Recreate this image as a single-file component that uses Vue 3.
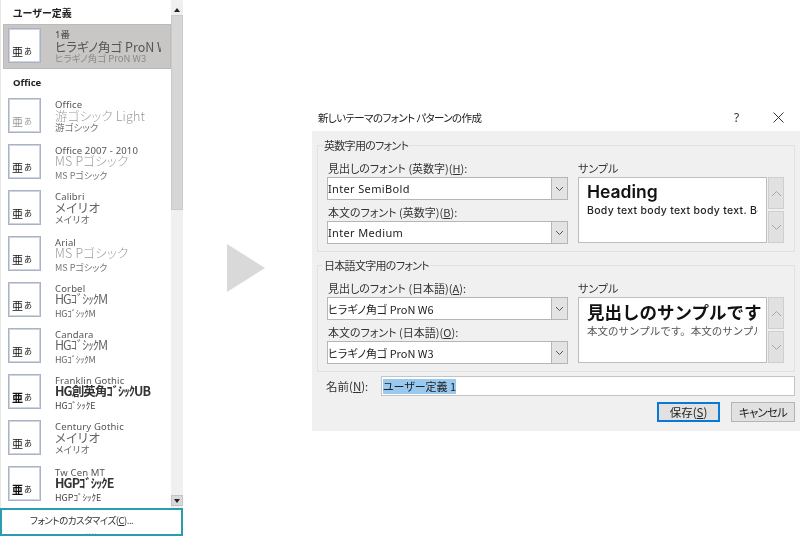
<script setup>
const items = [
  { name: 'Office', head: '游ゴシック Light', sub: '游ゴシック', tone: 'light', gap: '', thumb: 'pale' },
  { name: 'Office 2007 - 2010', head: 'MS Pゴシック', sub: 'MS Pゴシック', tone: 'light', gap: 'tall', thumb: '' },
  { name: 'Calibri', head: 'メイリオ', sub: 'メイリオ', tone: 'mid', gap: '', thumb: '' },
  { name: 'Arial', head: 'MS Pゴシック', sub: 'MS Pゴシック', tone: 'light', gap: 'tall', thumb: '' },
  { name: 'Corbel', head: 'HGｺﾞｼｯｸM', sub: 'HGｺﾞｼｯｸM', tone: 'mid narrow', gap: 'tall', thumb: '' },
  { name: 'Candara', head: 'HGｺﾞｼｯｸM', sub: 'HGｺﾞｼｯｸM', tone: 'mid narrow', gap: 'tall', thumb: '' },
  { name: 'Franklin Gothic', head: 'HG創英角ｺﾞｼｯｸUB', sub: 'HGｺﾞｼｯｸE', tone: 'bold', gap: 'tall', thumb: 'heavy' },
  { name: 'Century Gothic', head: 'メイリオ', sub: 'メイリオ', tone: 'mid', gap: '', thumb: '' },
  { name: 'Tw Cen MT', head: 'HGPｺﾞｼｯｸE', sub: 'HGPｺﾞｼｯｸE', tone: 'bold', gap: 'tall', thumb: 'heavy' },
]
const groups = [
  {
    title: '英数字用のフォント',
    cls: 'latin',
    rows: [
      { label: '見出しのフォント (英数字)(', key: 'H', value: 'Inter SemiBold' },
      { label: '本文のフォント (英数字)(', key: 'B', value: 'Inter Medium' },
    ],
    heading: 'Heading',
    body: 'Body text body text body text. Body',
  },
  {
    title: '日本語文字用のフォント',
    cls: 'jp',
    rows: [
      { label: '見出しのフォント (日本語)(', key: 'A', value: 'ヒラギノ角ゴ ProN W6' },
      { label: '本文のフォント (日本語)(', key: 'O', value: 'ヒラギノ角ゴ ProN W3' },
    ],
    heading: '見出しのサンプルです',
    body: '本文のサンプルです。本文のサンプルです',
  },
]
</script>

<template>
  <div class="page">
    <aside class="gallery">
      <div class="gallery-main">
        <div class="list">
          <div class="section first">ユーザー定義</div>
          <div class="item selected">
            <div class="thumb"><span class="kanji">亜</span><span class="kana">あ</span></div>
            <div class="texts">
              <div class="name">1番</div>
              <div class="head">ヒラギノ角ゴ ProN W6</div>
              <div class="sub">ヒラギノ角ゴ ProN W3</div>
            </div>
          </div>
          <div class="section second">Office</div>
          <div v-for="it in items" :key="it.name" class="item" :class="[it.tone, it.gap]">
            <div class="thumb" :class="it.thumb"><span class="kanji">亜</span><span class="kana">あ</span></div>
            <div class="texts">
              <div class="name">{{ it.name }}</div>
              <div class="head">{{ it.head }}</div>
              <div class="sub">{{ it.sub }}</div>
            </div>
          </div>
        </div>
        <div class="scrollbar">
          <div class="sb-btn"><i class="tri up"></i></div>
          <div class="sb-thumb"></div>
          <div class="sb-track"></div>
          <div class="sb-btn down"><i class="tri dn"></i></div>
        </div>
      </div>
      <div class="customize">フォントのカスタマイズ(<u>C</u>)...<span class="grip">....</span></div>
    </aside>

    <div class="arrow-col"><div class="arrow"></div></div>

    <div class="dialog-col">
      <section class="dialog">
        <header class="titlebar">
          <span class="title">新しいテーマのフォント パターンの作成</span>
          <span class="help">?</span>
          <svg class="close" width="11" height="11" viewBox="0 0 11 11"><path d="M.5.5l10 10M10.500.5l-10 10" stroke="#333" stroke-width="1" fill="none"/></svg>
        </header>
        <div class="body">
          <fieldset v-for="g in groups" :key="g.title" class="group" :class="g.cls">
            <legend>{{ g.title }}</legend>
            <div class="fields">
              <div v-for="r in g.rows" :key="r.key" class="field">
                <div class="label">{{ r.label }}<u>{{ r.key }}</u>):</div>
                <div class="select">
                  <span class="value">{{ r.value }}</span>
                  <span class="drop"><svg width="9" height="6" viewBox="0 0 9 6"><path d="M1 1l3.500 3.500L8 1" stroke="#555" fill="none"/></svg></span>
                </div>
              </div>
            </div>
            <div class="sample-col">
              <div class="label sample-label">サンプル</div>
              <div class="sample-row">
                <div class="sample">
                  <div class="s-head">{{ g.heading }}</div>
                  <div class="s-body">{{ g.body }}</div>
                </div>
                <div class="spins">
                  <span class="spin"><svg width="11" height="7" viewBox="0 0 11 7"><path d="M1 6l4.500-4.500L10 6" stroke="#a8a8a8" fill="none"/></svg></span>
                  <span class="spin"><svg width="11" height="7" viewBox="0 0 11 7"><path d="M1 1l4.500 4.500L10 1" stroke="#a8a8a8" fill="none"/></svg></span>
                </div>
              </div>
            </div>
          </fieldset>
          <div class="name-row">
            <span class="name-label">名前(<u>N</u>):</span>
            <div class="name-input"><span class="selection">ユーザー定義 1</span></div>
          </div>
          <div class="buttons">
            <button class="btn primary">保存(<u>S</u>)</button>
            <button class="btn cancel">キャンセル</button>
          </div>
        </div>
      </section>
    </div>
  </div>
</template>

<style scoped>
.page {
  width: 800px;
  height: 536px;
  display: flex;
  overflow: hidden;
  background: #fff;
  color: #222;
  font-family: "Noto Sans CJK JP", "Noto Sans", sans-serif;
  font-feature-settings: "palt";
  filter: blur(0.4px);
}
u { text-underline-offset: 1px; }

/* Gallery */
.gallery {
  width: 183px;
  flex: none;
  display: flex;
  flex-direction: column;
  height: 536px;
}
.gallery-main {
  flex: 1;
  min-height: 0;
  display: flex;
  border-left: 1px solid #e6e6e6;
}
.list {
  width: 170px;
  flex: none;
  overflow: hidden;
  padding-left: 2px;
  box-sizing: border-box;
}
.section {
  font-size: 10px;
  font-weight: 700;
  padding-left: 10px;
  color: #222;
}
.section.first { height: 24px; line-height: 26px; }
.section.second { height: 27px; line-height: 28px; font-family: "Noto Sans", sans-serif; font-size: 9.500px; }
.item {
  height: 46px;
  display: flex;
  padding: 2px 0 0 5px;
  gap: 14px;
  box-sizing: border-box;
  overflow: hidden;
}
.item.selected {
  height: 45px;
  background: #c9c7c5;
  border: 1px solid #bdbbb9;
  padding: 3px 0 0 4px;
}
.thumb {
  width: 33px;
  height: 35px;
  flex: none;
  box-sizing: border-box;
  background: #fff;
  border: 1px solid #a9b2c6;
  box-shadow: inset 0 0 0 1px #cfd4df;
  display: flex;
  align-items: flex-end;
  padding: 0 0 5px 3px;
  line-height: 12px;
  color: #111;
}
.kanji { font-size: 11px; }
.kana { font-size: 8px; margin-left: 1px; }
.thumb.pale { color: #9a9a9a; }
.thumb.heavy .kanji { font-weight: 700; }
.texts { min-width: 0; flex: 1; white-space: nowrap; overflow: hidden; }
.name {
  font-size: 9.500px;
  line-height: 11px;
  height: 11px;
  margin-top: 1px;
  font-family: "Noto Sans", "Noto Sans CJK JP", sans-serif;
  color: #555;
  letter-spacing: 0.15px;
}
.head {
  font-size: 12.500px;
  line-height: 12px;
  height: 12px;
  color: #555;
}
.sub {
  font-size: 9.500px;
  line-height: 11px;
  height: 11px;
  color: #8a8a8a;
}
.item.tall .head { height: 10px; line-height: 10px; }
.item.tall .sub { margin-top: 4px; font-size: 9px; }
.item.selected .texts { max-width: 106px; }
.item.selected .head { font-size: 12.500px; height: 13px; line-height: 13px; }
.item.selected .sub { font-size: 9.500px; }
.item.selected .name { color: #444; margin-top: 1px; }
.item.light .head { color: #9b9b9b; font-size: 12.500px; font-weight: 300; letter-spacing: 0.2px; }
.item.light .sub { color: #777; }
.item.mid .head { color: #666; letter-spacing: 0.4px; }
.item.mid .sub { color: #666; letter-spacing: 0.4px; }
.item.narrow .head { letter-spacing: -1px; }
.item.narrow .sub { letter-spacing: -0.3px; }
.item.bold .head { color: #333; font-weight: 700; letter-spacing: -0.9px; }
.item.bold .sub { color: #444; }
.scrollbar {
  width: 12px;
  flex: none;
  display: flex;
  flex-direction: column;
  background: #f0f0f0;
}
.sb-btn {
  height: 11px;
  flex: none;
  display: flex;
  align-items: center;
  justify-content: center;
  margin-top: 4px;
  background: #efefef;
}
.sb-btn.down { margin: 0 0 2px; background: #d9d9d9; border: 1px solid #c4c4c4; box-sizing: border-box; }
.tri { width: 0; height: 0; border-left: 3px solid transparent; border-right: 3px solid transparent; }
.tri.up { border-bottom: 4px solid #222; }
.tri.dn { border-top: 4px solid #222; }
.sb-thumb { height: 195px; flex: none; background: #d6d6d6; border: 1px solid #cbcbcb; box-sizing: border-box; }
.sb-track { flex: 1; }
.customize {
  height: 28px;
  flex: none;
  box-sizing: border-box;
  border: 2px solid #2b9cae;
  padding-left: 28px;
  font-size: 9.500px;
  letter-spacing: -0.5px;
  line-height: 21px;
  color: #333;
  position: relative;
}
.grip {
  position: absolute;
  left: 0;
  right: 0;
  bottom: 0;
  text-align: center;
  font-size: 7px;
  line-height: 5px;
  color: #bbb;
  letter-spacing: 1px;
}

/* Arrow */
.arrow-col {
  width: 129px;
  flex: none;
  display: flex;
  align-items: flex-start;
  padding: 244px 0 0 44px;
  box-sizing: border-box;
}
.arrow {
  width: 0;
  height: 0;
  border-left: 38px solid #d9d9d9;
  border-top: 24px solid transparent;
  border-bottom: 24px solid transparent;
}

/* Dialog */
.dialog-col { flex: 1; padding-top: 100px; }
.dialog { width: 488px; }
.titlebar {
  height: 31px;
  display: flex;
  align-items: center;
  padding: 3px 0 0 6px;
  box-sizing: border-box;
  background: #fff;
}
.title { flex: 1; font-size: 10.500px; letter-spacing: -0.6px; color: #222; }
.help { font-size: 12px; width: 39px; color: #333; font-family: "Noto Sans", sans-serif; }
.close { margin-right: 16px; }
.body {
  height: 300px;
  background: #f0f0f0;
  padding: 6px 5px 0;
  box-sizing: border-box;
  display: flex;
  flex-direction: column;
}
.group {
  margin: 0;
  padding: 0 9px;
  border: 1px solid #e2e2e2;
  display: flex;
  gap: 10px;
  height: 115px;
  box-sizing: border-box;
  min-inline-size: 0;
}
.group.jp { margin-top: 5px; }
legend {
  font-size: 11px;
  letter-spacing: -0.7px;
  line-height: 16px;
  padding: 0 1px;
  margin-left: -4px;
  color: #333;
}
.fields {
  width: 241px;
  flex: none;
  display: flex;
  flex-direction: column;
  gap: 3px;
  padding-top: 6px;
}
.field { display: flex; flex-direction: column; }
.label { font-size: 11px; line-height: 18px; height: 18px; color: #333; padding-left: 1px; }
.select {
  height: 23px;
  box-sizing: border-box;
  background: #fff;
  border: 1px solid #b5b5b5;
  display: flex;
  align-items: center;
}
.value {
  flex: 1;
  font-size: 11px;
  letter-spacing: 0.35px;
  color: #222;
  font-family: "Noto Sans", "Noto Sans CJK JP", sans-serif;
}
.jp .value { letter-spacing: 0; font-family: "Noto Sans CJK JP", sans-serif; }
.drop {
  width: 15px;
  height: 21px;
  background: #e3e3e3;
  border-left: 1px solid #b5b5b5;
  display: flex;
  align-items: center;
  justify-content: center;
}
.sample-col { width: 206px; flex: none; padding-top: 6px; }
.sample-label { padding-left: 0; }
.sample-row { display: flex; gap: 1px; }
.sample {
  width: 189px;
  height: 66px;
  flex: none;
  box-sizing: border-box;
  background: #fff;
  border: 1px solid #bdbdbd;
  padding: 2px 8px;
  overflow: hidden;
  white-space: nowrap;
  font-family: Inter, "Noto Sans CJK JP", sans-serif;
  font-feature-settings: normal;
}
.s-head { font-size: 17.500px; line-height: 23px; font-weight: 600; color: #111; }
.s-body { font-size: 10.500px; line-height: 14px; margin-top: 1px; font-weight: 500; color: #222; letter-spacing: 0.3px; width: 171px; overflow: hidden; }
.jp .sample { font-family: "Noto Sans CJK JP", sans-serif; }
.jp .s-head { font-size: 17.500px; font-weight: 700; line-height: 24px; }
.jp .s-body { color: #555; font-weight: 400; font-size: 10.500px; letter-spacing: 0; margin-top: 0; }
.spins { display: flex; flex-direction: column; gap: 2px; }
.spin {
  width: 16px;
  height: 32px;
  box-sizing: border-box;
  background: #e1e1e1;
  border: 1px solid #cfcfcf;
  display: flex;
  align-items: center;
  justify-content: center;
}
.name-row {
  display: flex;
  align-items: center;
  margin-top: 4px;
  height: 20px;
}
.name-label { width: 64px; font-size: 11.500px; padding-left: 9px; box-sizing: border-box; color: #333; }
.name-input {
  width: 415px;
  height: 20px;
  box-sizing: border-box;
  background: #fff;
  border: 1px solid #c4c4c4;
  padding-left: 1px;
  display: flex;
  align-items: center;
}
.selection { background: #99c9ef; font-size: 11px; line-height: 15px; color: #222; }
.buttons {
  display: flex;
  justify-content: flex-end;
  gap: 11px;
  margin-top: 6px;
}
.btn {
  width: 64px;
  height: 20px;
  padding: 0;
  box-sizing: border-box;
  background: #e1e1e1;
  border: 1px solid #b5b5b5;
  font: 11.500px "Noto Sans CJK JP", sans-serif;
  font-feature-settings: "palt";
  color: #222;
}
.btn.cancel { letter-spacing: -0.8px; }
.btn.primary { border: 2px solid #0a78d7; width: 63px; }
</style>
